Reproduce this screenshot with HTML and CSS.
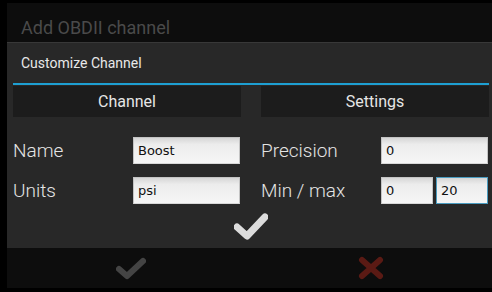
FILE: index.html
```html
<!DOCTYPE html>
<html lang="en">
<head>
    <meta charset="UTF-8">
    <title>Add OBDII channel</title>
    <link rel="stylesheet" href="styles.css">
</head>
<body>
    <div class="outer-dialog">
        <div class="outer-title">Add OBDII channel</div>

        <div class="dialog">
            <div class="dialog-header">Customize Channel</div>
            <div class="dialog-body">
                <div class="tabs">
                    <div class="tab">Channel</div>
                    <div class="tab">Settings</div>
                </div>

                <div class="form-grid">
                    <div class="field">
                        <label class="field-label">Name</label>
                        <input class="field-input" type="text" value="Boost">
                    </div>
                    <div class="field">
                        <label class="field-label">Precision</label>
                        <input class="field-input" type="text" value="0">
                    </div>
                    <div class="field">
                        <label class="field-label">Units</label>
                        <input class="field-input" type="text" value="psi">
                    </div>
                    <div class="field">
                        <label class="field-label">Min / max</label>
                        <div class="minmax">
                            <input class="field-input" type="text" value="0">
                            <input class="field-input focused" type="text" value="20">
                        </div>
                    </div>
                </div>

                <div class="confirm">
                    <svg width="34" height="27" viewBox="0 0 34 27">
                        <path d="M3 14 L13 23 L31 4" fill="none" stroke="#dcdcdc" stroke-width="7" stroke-linecap="round" stroke-linejoin="round"/>
                    </svg>
                </div>
            </div>
        </div>

        <div class="button-bar">
            <div class="bar-btn ok">
                <svg width="30" height="23" viewBox="0 0 30 23">
                    <path d="M3 12 L11 19 L27 4" fill="none" stroke="#444" stroke-width="6" stroke-linecap="round" stroke-linejoin="round"/>
                </svg>
            </div>
            <div class="bar-btn">
                <svg width="26" height="24" viewBox="0 0 26 24">
                    <path d="M4 4 L22 20 M22 4 L4 20" fill="none" stroke="#5a1a14" stroke-width="6" stroke-linecap="round"/>
                </svg>
            </div>
        </div>
    </div>
</body>
</html>
```

FILE: styles.css
```css
body {
    margin: 0;
    background: #000;
    font-family: Roboto, "Noto Sans", sans-serif;
    width: 492px;
    height: 292px;
    overflow: hidden;
}

.outer-dialog {
    margin: 3px 0 0 7px;
    width: 490px;
    height: 285px;
    background: #0d0d0d;
    display: flex;
    flex-direction: column;
}

.outer-title {
    box-sizing: border-box;
    height: 39px;
    padding: 14px 0 0 14px;
    line-height: 21px;
    font-size: 18px;
    color: #4a4a4a;
}

.dialog {
    background: #282828;
    border-top: 1px solid #383838;
    height: 205px;
}

.dialog-header {
    height: 40px;
    margin: 0 0 0 6px;
    padding-left: 8px;
    display: flex;
    align-items: center;
    font-size: 14px;
    color: #e8e8e8;
    border-bottom: 2px solid #1e9fd2;
    width: 468px;
}

.dialog-body {
    padding: 0 0 0 6px;
    width: 476px;
}

.tabs {
    display: grid;
    grid-template-columns: 228px 228px;
    gap: 20px;
    margin-top: 1px;
}

.tab {
    background: #1c1c1c;
    height: 31px;
    display: flex;
    align-items: center;
    justify-content: center;
    font-size: 16px;
    color: #e6e6e6;
}

.form-grid {
    display: grid;
    grid-template-columns: 228px 228px;
    column-gap: 20px;
    row-gap: 13px;
    margin-top: 20px;
}

.field {
    display: flex;
    align-items: center;
    height: 27px;
}

.field-label {
    width: 120px;
    flex-shrink: 0;
    font-size: 19px;
    font-weight: 300;
    color: #e4e4e4;
}

.field-input {
    box-sizing: border-box;
    width: 107px;
    height: 27px;
    margin: 0;
    border: 1px solid #c4c4c4;
    border-bottom-color: #d8d8d8;
    background: linear-gradient(#d6d6d6, #ececec 25%, #f6f6f6);
    font-family: "DejaVu Sans", sans-serif;
    font-size: 13px;
    color: #111;
    padding: 0 4px;
    outline: none;
}

.minmax {
    display: flex;
    gap: 3px;
}

.minmax .field-input {
    width: 52px;
}

.field-input.focused {
    border: 1px solid #4a9cc0;
}

.confirm {
    display: flex;
    justify-content: center;
    margin-top: 9px;
}

.button-bar {
    display: grid;
    grid-template-columns: 1fr 1fr;
    height: 40px;
    width: 485px;
}

.bar-btn {
    display: flex;
    align-items: center;
    justify-content: center;
}

.bar-btn.ok {
    padding-left: 6px;
}
```
